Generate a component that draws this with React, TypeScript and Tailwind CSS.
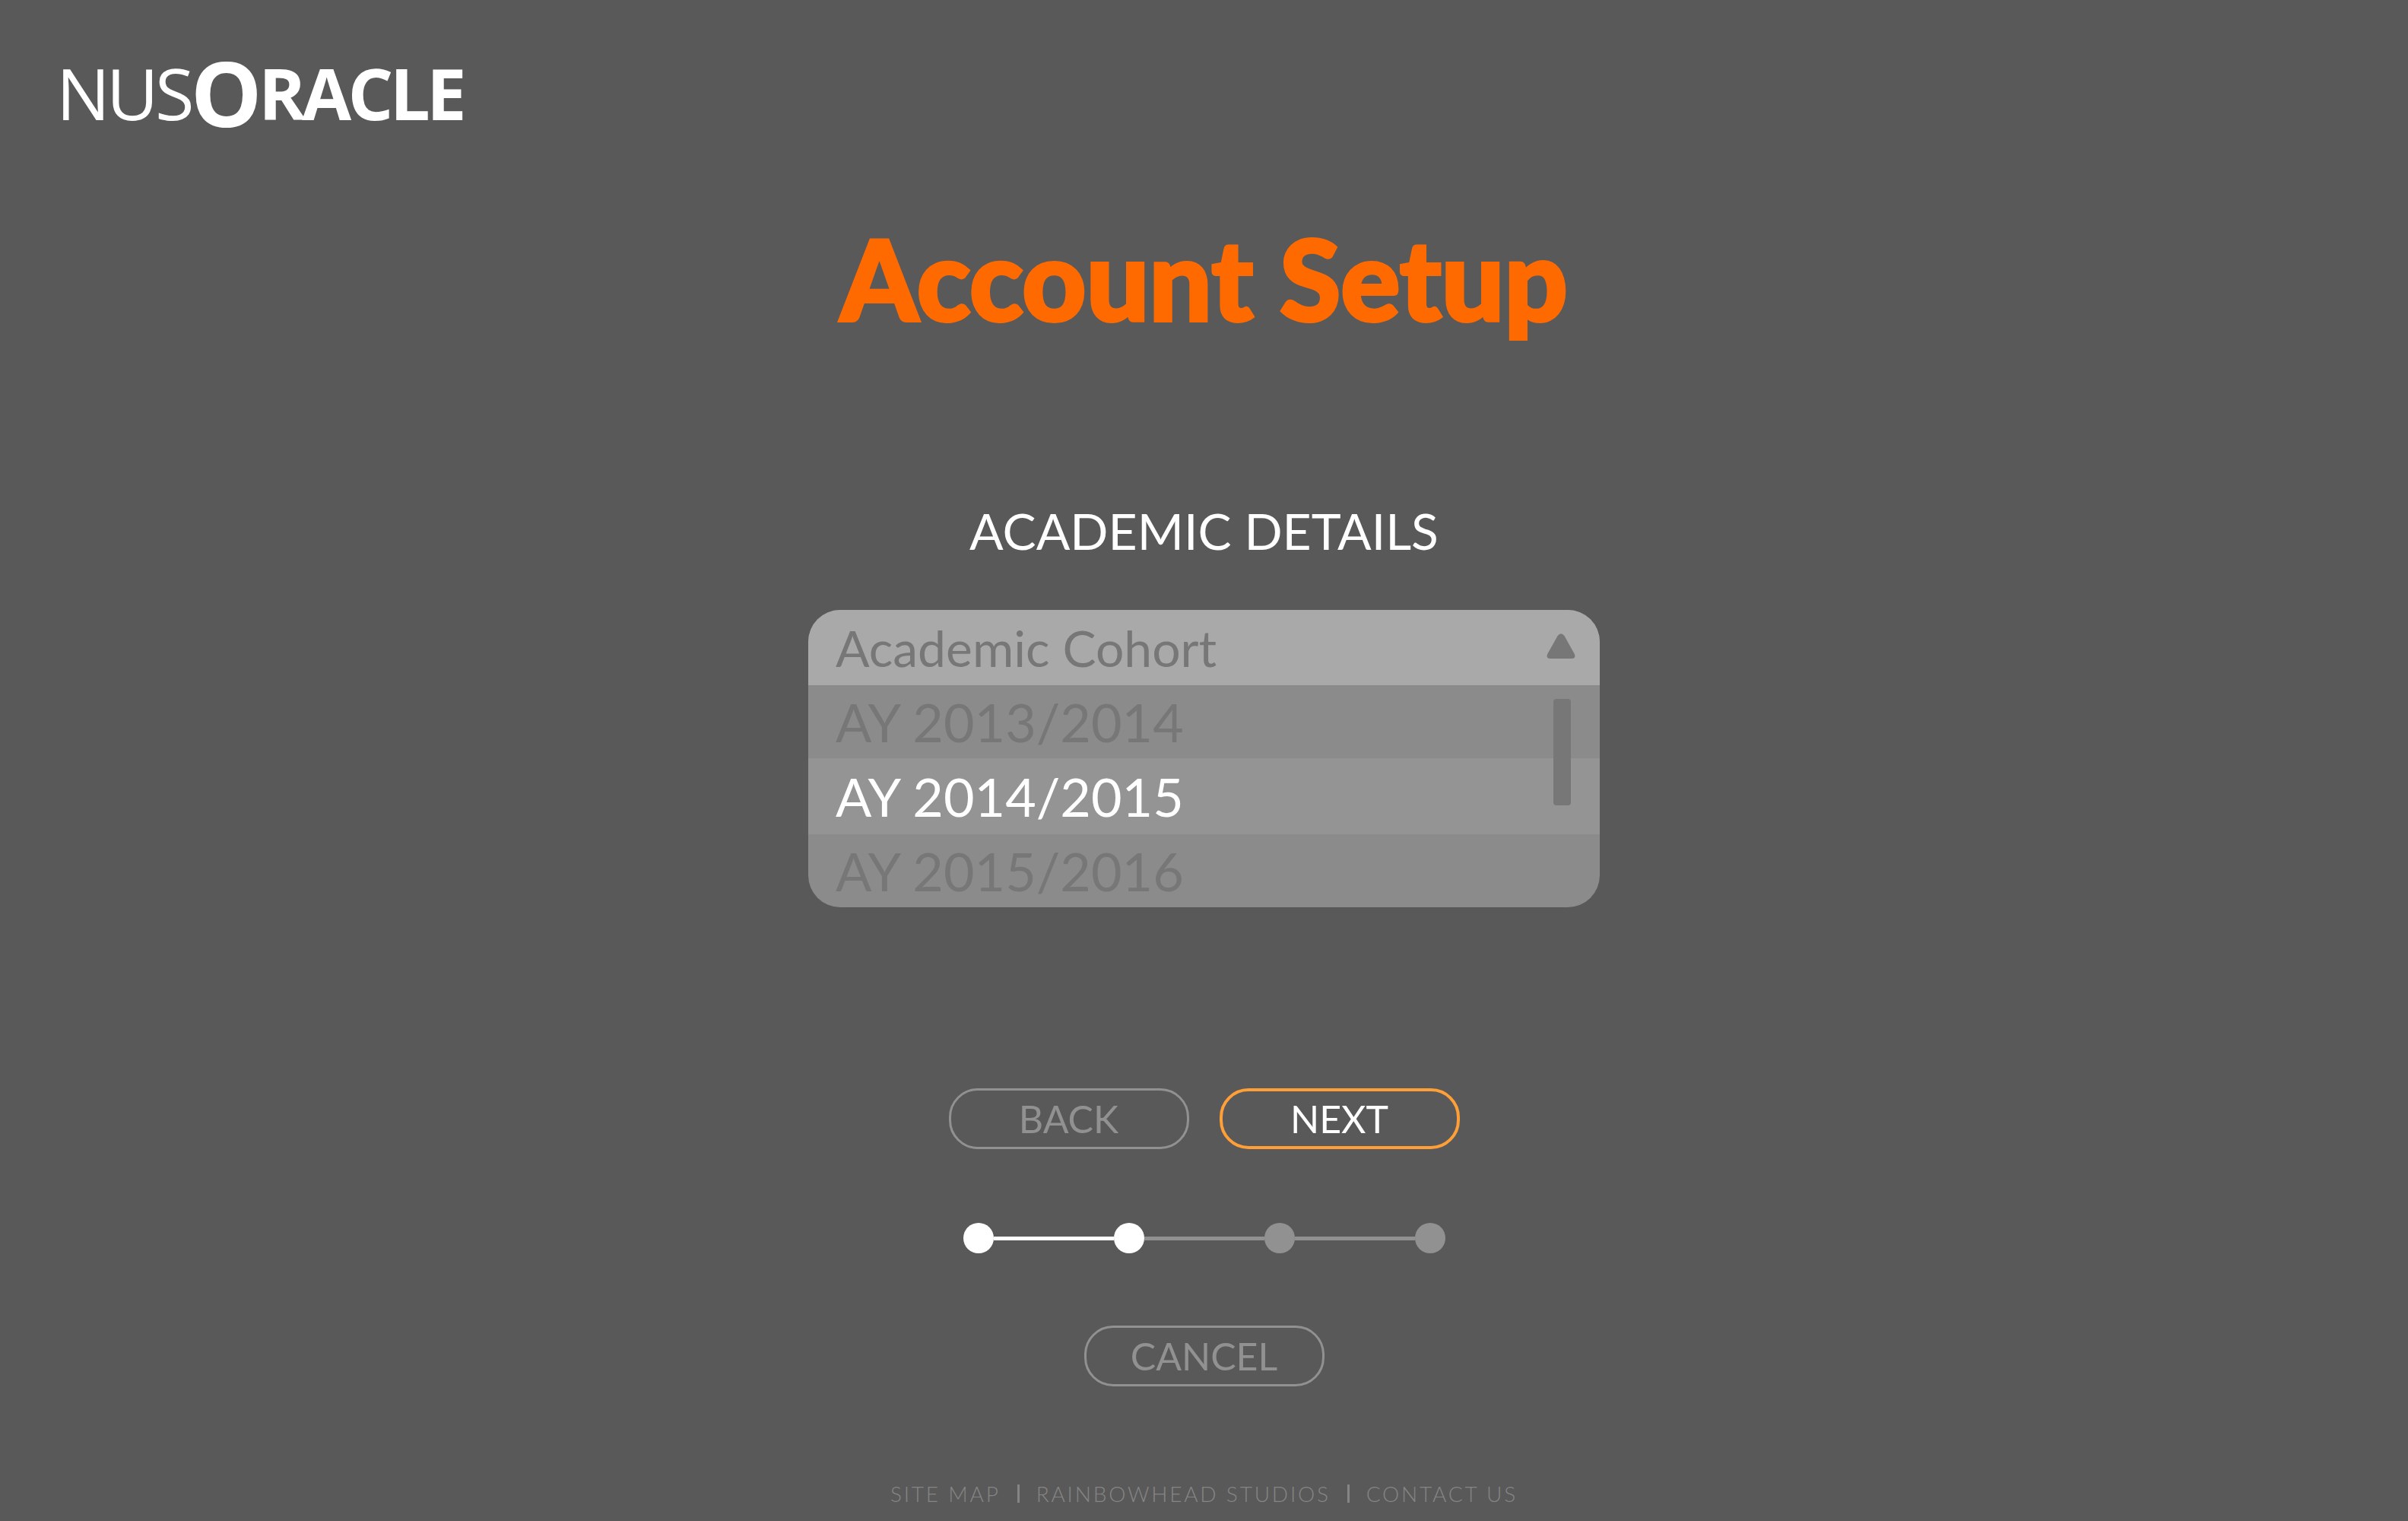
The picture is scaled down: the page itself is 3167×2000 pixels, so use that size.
import { useState } from "react";

const cohorts = ["AY 2013/2014", "AY 2014/2015", "AY 2015/2016"];
const steps = ["Profile", "Academic details", "Modules", "Confirmation"];
const currentStep = 1;

function Logo() {
  return (
    <a
      href="#"
      aria-label="NUSOracle"
      className="flex items-center font-['Open_Sans',sans-serif] text-[94px] leading-[120px] tracking-tighter text-white"
    >
      <span>NUS</span>
      <span className="text-[118px] font-bold">O</span>
      <span className="font-bold">RACLE</span>
    </a>
  );
}

function CohortPicker() {
  const [open, setOpen] = useState(true);
  const [selected, setSelected] = useState("AY 2014/2015");
  return (
    <div className="relative w-full max-w-[1041px] overflow-hidden rounded-[42px] bg-[#8b8b8b] text-[70px] leading-none">
      <button
        type="button"
        aria-expanded={open}
        onClick={() => setOpen(!open)}
        className="flex h-[99px] w-full items-center justify-between bg-[#a9a9a9] pr-8 pl-9 text-left text-[66px] text-[#777777]"
      >
        <span>Academic Cohort</span>
        <svg viewBox="0 0 38 34" className="mb-1 h-[34px] w-[38px]" aria-hidden="true">
          <path
            d="M14.5 3.2Q19 -2.5 23.5 3.2L36.8 27Q39 33 33 33H5Q-1 33 1.2 27Z"
            fill="#777777"
          />
        </svg>
      </button>
      {open && (
        <div role="radiogroup" aria-label="Academic Cohort">
          {cohorts.map((cohort) => (
            <label
              key={cohort}
              className="flex h-24 cursor-pointer items-center pl-9 text-[#777777] has-checked:h-[100px] has-checked:bg-[#949494] has-checked:text-white"
            >
              <input
                type="radio"
                name="cohort"
                className="sr-only"
                checked={selected === cohort}
                onChange={() => setSelected(cohort)}
              />
              {cohort}
            </label>
          ))}
          <div className="absolute top-[117px] right-[38px] h-[140px] w-[23px] rounded-sm bg-[#777777]" />
        </div>
      )}
    </div>
  );
}

function Progress() {
  return (
    <ol className="flex items-center" aria-label="Setup progress">
      {steps.map((step, i) => (
        <li key={step} className="flex items-center" aria-label={step}>
          {i > 0 && (
            <span
              className={`h-[5px] w-[158px] ${i <= currentStep ? "bg-white" : "bg-[#919191]"}`}
            />
          )}
          <span
            className={`size-10 rounded-full ${i <= currentStep ? "bg-white" : "bg-[#919191]"}`}
          />
        </li>
      ))}
    </ol>
  );
}

const buttonClass =
  "flex h-20 w-[316px] items-center justify-center rounded-[38px] text-[50px] leading-none";

export default function App() {
  return (
    <div className="flex min-h-screen flex-col bg-[#595959] font-[Lato,sans-serif]">
      <header className="flex px-[74px] pt-[62px]">
        <Logo />
      </header>
      <main className="flex flex-1 flex-col items-center">
        <h1 className="mt-[104px] text-[146px] leading-[160px] font-black text-[#ff6a00] [-webkit-text-stroke:4px_#ff6a00]">
          Account Setup
        </h1>
        <h2 className="mt-[212px] text-[66px] leading-[80px] text-white">ACADEMIC DETAILS</h2>
        <div className="mt-16 flex w-full justify-center">
          <CohortPicker />
        </div>
        <div className="mt-[238px] flex gap-10">
          <button type="button" className={`${buttonClass} border-3 border-[#919191] text-[#919191]`}>
            BACK
          </button>
          <button type="button" className={`${buttonClass} border-4 border-[#ff9f38] text-white`}>
            NEXT
          </button>
        </div>
        <div className="mt-[97px]">
          <Progress />
        </div>
        <button
          type="button"
          className={`${buttonClass} mt-[95px] border-3 border-[#919191] text-[#919191]`}
        >
          CANCEL
        </button>
      </main>
      <footer className="flex items-center justify-center gap-[22px] pb-5 text-[28px] leading-8 font-light tracking-widest text-[#858585]">
        <a href="#">SITE MAP</a>
        <span className="h-6 w-[3px] bg-[#858585]" />
        <a href="#">RAINBOWHEAD STUDIOS</a>
        <span className="h-6 w-[3px] bg-[#858585]" />
        <a href="#">CONTACT US</a>
      </footer>
    </div>
  );
}
